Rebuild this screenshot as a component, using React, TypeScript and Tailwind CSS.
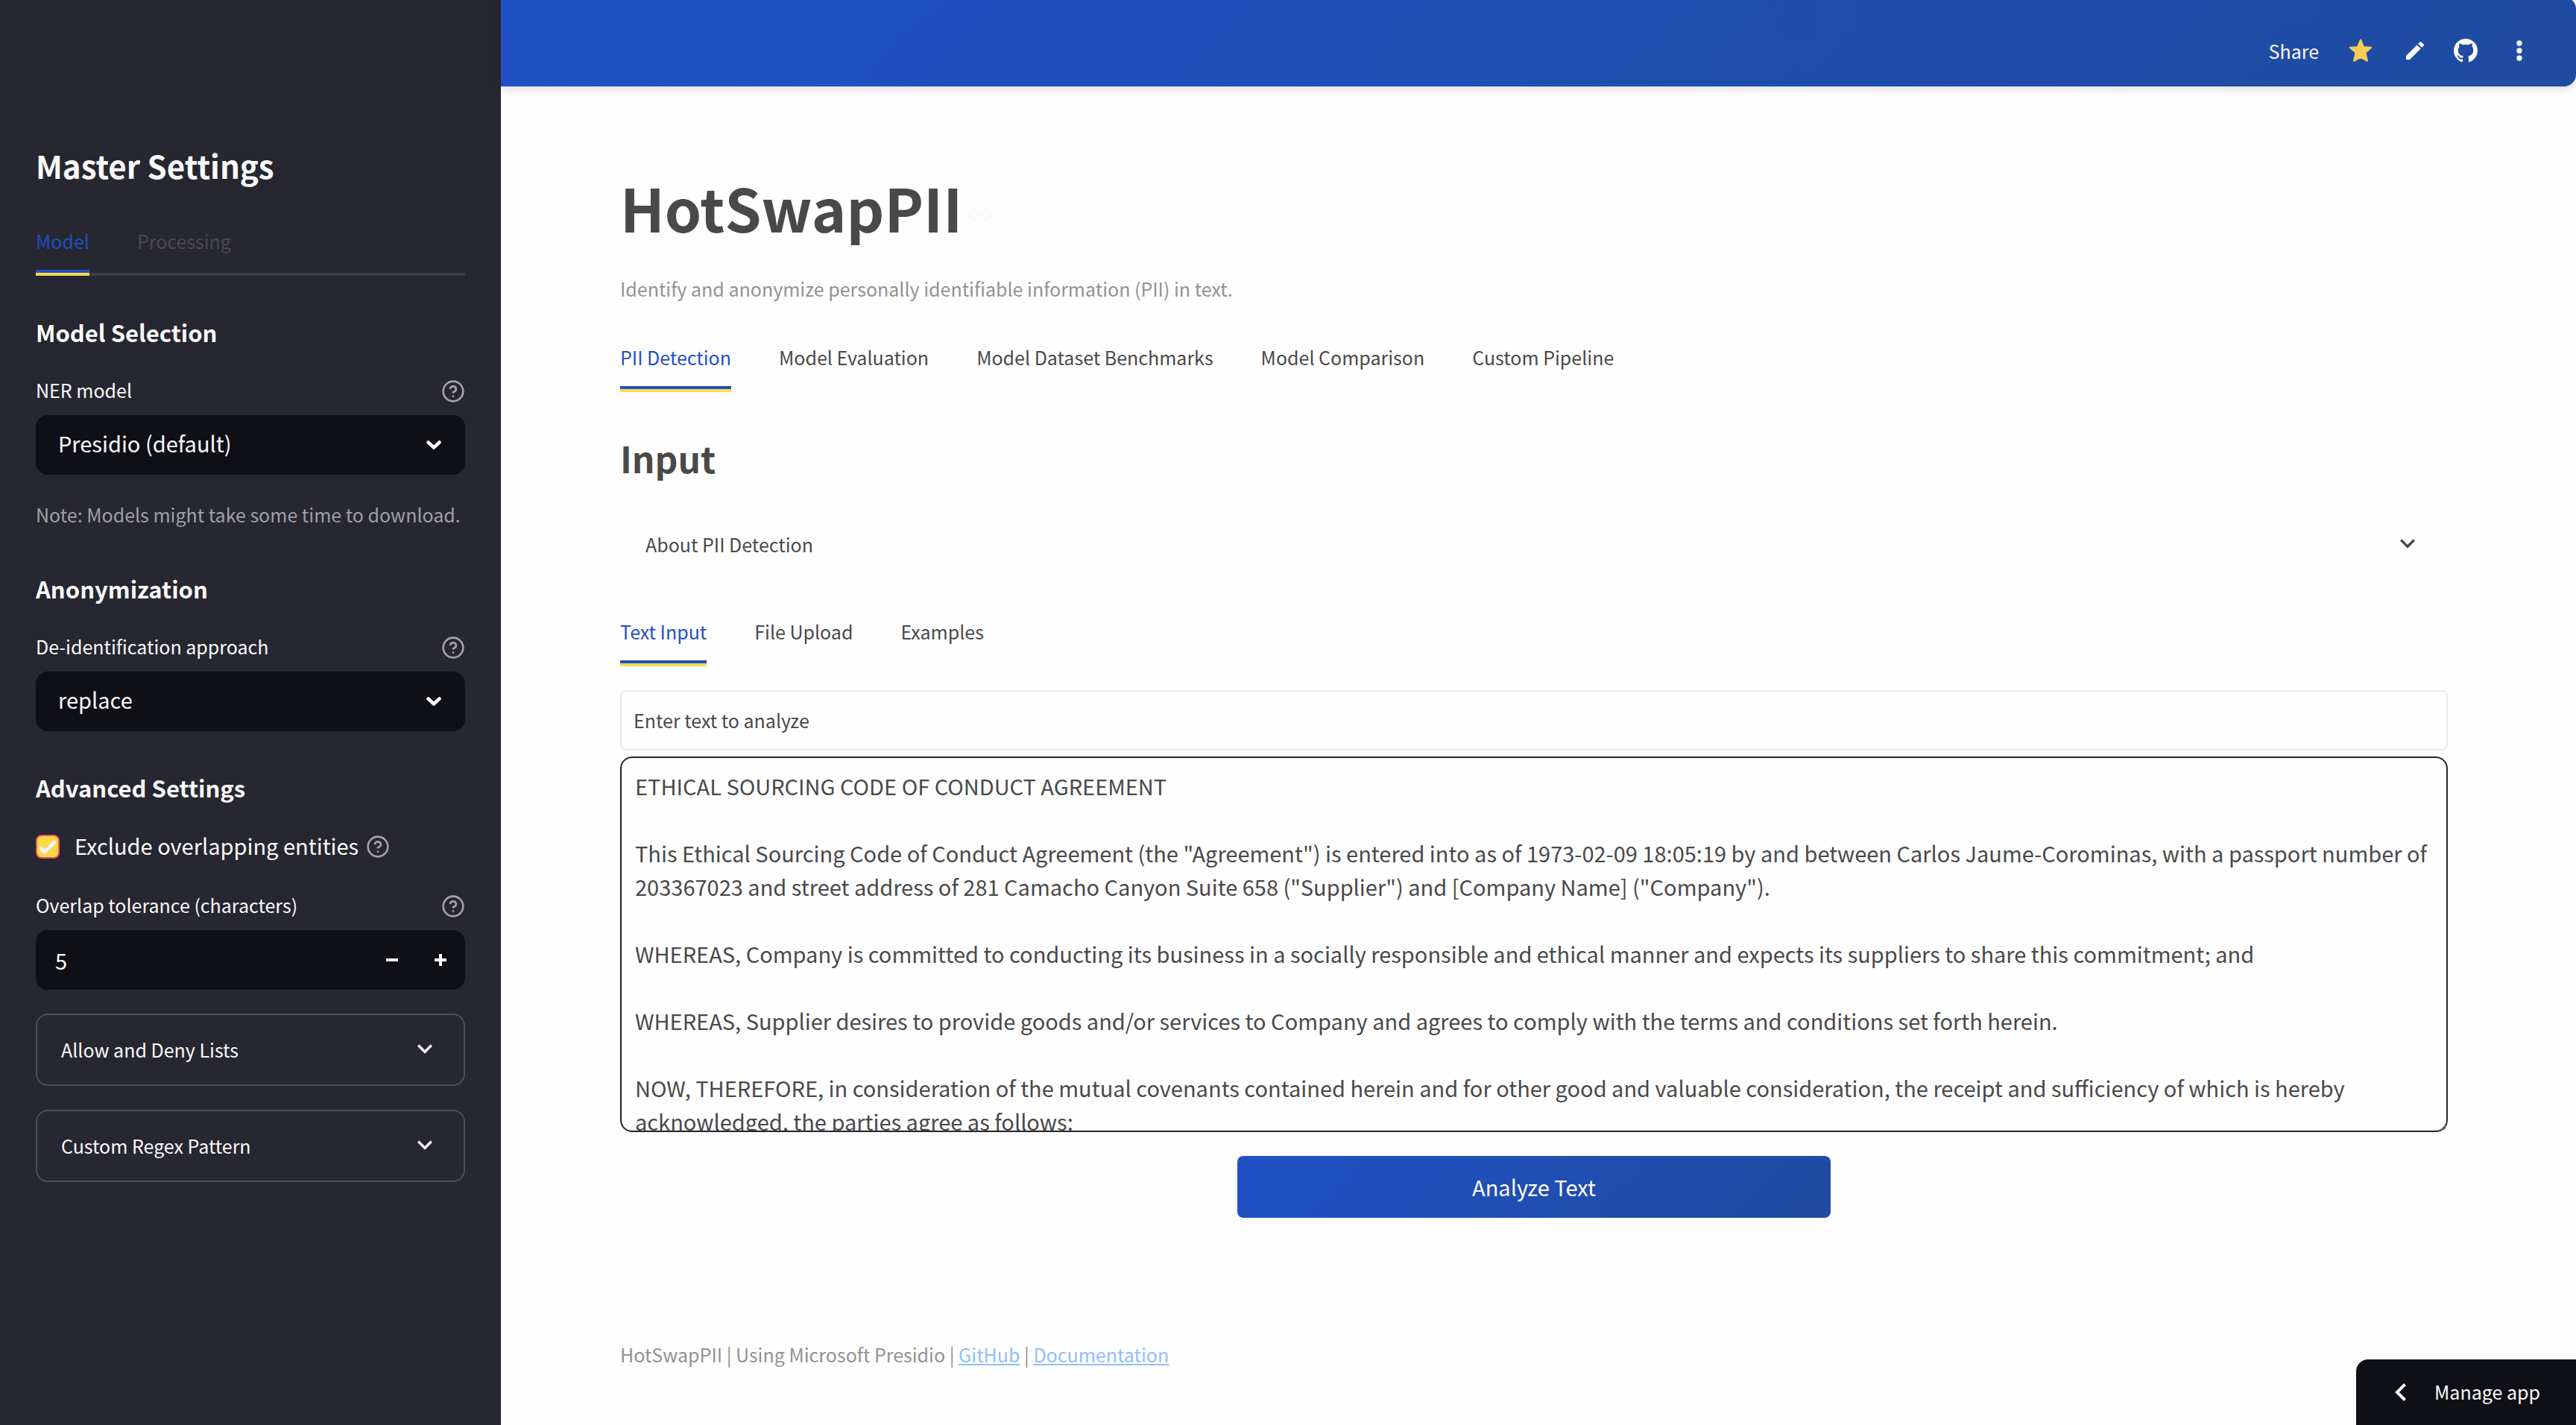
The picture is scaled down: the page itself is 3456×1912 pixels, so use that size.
import React, { useState } from "react";

const AGREEMENT = `ETHICAL SOURCING CODE OF CONDUCT AGREEMENT

This Ethical Sourcing Code of Conduct Agreement (the "Agreement") is entered into as of 1973-02-09 18:05:19 by and between Carlos Jaume-Corominas, with a passport number of 203367023 and street address of 281 Camacho Canyon Suite 658 ("Supplier") and [Company Name] ("Company").

WHEREAS, Company is committed to conducting its business in a socially responsible and ethical manner and expects its suppliers to share this commitment; and

WHEREAS, Supplier desires to provide goods and/or services to Company and agrees to comply with the terms and conditions set forth herein.

NOW, THEREFORE, in consideration of the mutual covenants contained herein and for other good and valuable consideration, the receipt and sufficiency of which is hereby acknowledged, the parties agree as follows:`;

function HelpIcon() {
  return (
    <svg className="mt-1 size-8 shrink-0 text-[#a3a3a7]" viewBox="0 0 24 24" fill="none" stroke="currentColor" strokeWidth="2" strokeLinecap="round" strokeLinejoin="round" role="img" aria-label="Help">
      <circle cx="12" cy="12" r="10" />
      <path d="M9.09 9a3 3 0 0 1 5.83 1c0 2-3 3-3 3" />
      <path d="M12 17h.01" />
    </svg>
  );
}

function ExpandIcon() {
  return (
    <svg className="-mt-1 size-10 shrink-0" viewBox="0 0 24 24" fill="currentColor" aria-hidden="true">
      <path d="M16.59 8.59 12 13.17 7.41 8.59 6 10l6 6 6-6z" />
    </svg>
  );
}

function Tabs({ labels, dark = false }: { labels: string[]; dark?: boolean }) {
  const [active, setActive] = useState(0);
  return (
    <div
      role="tablist"
      className={
        dark
          ? "flex gap-16 text-[#49494b] shadow-[inset_0_-4px_0_#3c3d46]"
          : "flex gap-16 text-[#494949] shadow-[inset_0_-4px_0_#fdfdfd]"
      }
    >
      {labels.map((label, i) => (
        <button
          key={label}
          type="button"
          role="tab"
          aria-selected={i === active}
          onClick={() => setActive(i)}
          className={
            i === active
              ? "border-b-4 border-[#fdda48] text-[#1f4fc6]"
              : "border-b-4 border-transparent"
          }
        >
          <span
            className={
              i === active
                ? "block border-b-4 border-[#1f4fc6] pb-[18px] text-[25px] leading-[42px]"
                : "block border-b-4 border-transparent pb-[18px] text-[25px] leading-[42px]"
            }
          >
            {label}
          </span>
        </button>
      ))}
    </div>
  );
}

function FieldLabel({ htmlFor, children }: { htmlFor: string; children: string }) {
  return (
    <div className="mb-3.5 flex h-10 items-center justify-between">
      <label htmlFor={htmlFor} className="text-[25px] leading-10">
        {children}
      </label>
      <HelpIcon />
    </div>
  );
}

function SelectField({ id, label, options }: { id: string; label: string; options: string[] }) {
  return (
    <div>
      <FieldLabel htmlFor={id}>{label}</FieldLabel>
      <div className="relative">
        <select id={id} className="block h-20 w-full appearance-none rounded-2xl bg-[#0f1016] pr-16 pb-1 pl-[30px] text-[29px]">
          {options.map((o) => (
            <option key={o}>{o}</option>
          ))}
        </select>
        <svg className="pointer-events-none absolute inset-y-0 right-8 my-auto h-3 w-5" viewBox="0 0 20 12" fill="none" stroke="currentColor" strokeWidth="4.5" strokeLinecap="round" aria-hidden="true">
          <path d="M2.5 2.5 10 9.5l7.5-7" />
        </svg>
      </div>
    </div>
  );
}

function SideExpander({ children }: { children: string }) {
  return (
    <button type="button" className="mt-8 flex h-[97px] w-full items-center justify-between rounded-2xl border-2 border-[#4e4f57] px-8 text-[25px]">
      {children}
      <ExpandIcon />
    </button>
  );
}

function SectionHeading({ children }: { children: string }) {
  return <h2 className="text-[31px] leading-[38px] font-bold">{children}</h2>;
}

function Sidebar() {
  const [count, setCount] = useState(5);
  return (
    <aside className="w-[672px] shrink-0 bg-[#262730] px-12 pt-[196px] pb-12 text-[#fafafa]">
      <h1 className="text-[42px] leading-[52px] font-bold">Master Settings</h1>
      <div className="mt-[54px]">
        <Tabs dark labels={["Model", "Processing"]} />
      </div>

      <div className="mt-[57px] mb-[38px]">
        <SectionHeading>Model Selection</SectionHeading>
      </div>
      <SelectField id="ner" label="NER model" options={["Presidio (default)"]} />
      <p className="mt-[33px] text-[25px] leading-10 text-[#a0a0a4]">Note: Models might take some time to download.</p>

      <div className="mt-[61px] mb-[38px]">
        <SectionHeading>Anonymization</SectionHeading>
      </div>
      <SelectField id="approach" label="De-identification approach" options={["replace"]} />

      <div className="mt-[57px] mb-[34px]">
        <SectionHeading>Advanced Settings</SectionHeading>
      </div>
      <div className="mb-9 flex h-12 items-center">
        <span className="relative mt-1 block size-8">
          <input id="exclude" type="checkbox" defaultChecked className="block size-8 appearance-none rounded-lg border-2 border-[#f0584f] bg-[#fbd84a]" />
          <svg className="pointer-events-none absolute inset-0 size-8" viewBox="0 0 32 32" fill="none" stroke="#f2f2f2" strokeWidth="5" aria-hidden="true">
            <path d="M5 16.5 12 23 26.5 8.5" />
          </svg>
        </span>
        <label htmlFor="exclude" className="mr-2.5 ml-5 text-[29px] leading-[48px]">
          Exclude overlapping entities
        </label>
        <HelpIcon />
      </div>

      <FieldLabel htmlFor="tolerance">Overlap tolerance (characters)</FieldLabel>
      <div className="flex h-20 items-center overflow-hidden rounded-2xl bg-[#0f1016]">
        <input
          id="tolerance"
          type="text"
          inputMode="numeric"
          value={count}
          onChange={(e) => setCount(Number(e.target.value) || 0)}
          className="h-full min-w-0 flex-1 bg-transparent pl-[26px] text-[29px] outline-none"
        />
        <button type="button" aria-label="Decrease" onClick={() => setCount(count - 1)} className="flex h-full w-16 items-center justify-center">
          <span className="h-1 w-4 bg-current" />
        </button>
        <button type="button" aria-label="Increase" onClick={() => setCount(count + 1)} className="flex h-full w-[66px] items-center justify-center">
          <svg className="size-4" viewBox="0 0 16 16" fill="currentColor" aria-hidden="true">
            <path d="M6 0h4v6h6v4h-6v6H6v-6H0V6h6z" />
          </svg>
        </button>
      </div>

      <SideExpander>Allow and Deny Lists</SideExpander>
      <SideExpander>Custom Regex Pattern</SideExpander>
    </aside>
  );
}

function TopBar() {
  return (
    <header className="-mt-1 flex h-30 items-center justify-end rounded-r-2xl bg-linear-[135deg,#2151c6,#1f4ba0] pt-6 pr-[60px] text-[#fafafa] shadow-[0_4px_12px_rgba(0,0,0,0.12)]">
      <button type="button" className="mr-[38px] text-[25px] leading-10">Share</button>
      <button type="button" aria-label="Star" className="mr-[39px] text-[#f3cd52]">
        <svg className="size-9" viewBox="0 0 36 36" fill="currentColor" stroke="currentColor" strokeWidth="2" strokeLinejoin="round" aria-hidden="true">
          <path d="M18 3.500 21.900 13 32.300 13.700 24.500 20.600 27 31.800 18 26.900 9 31.800 11.500 20.600 3.700 13.700 14.100 13z" />
        </svg>
      </button>
      <button type="button" aria-label="Edit" className="mr-9">
        <svg className="size-8" viewBox="0 0 24 24" fill="currentColor" aria-hidden="true">
          <path d="M3 17.46v3.04c0 .28.22.5.5.5h3.04c.13 0 .26-.05.35-.15L17.81 9.94l-3.75-3.75L3.15 17.1c-.1.1-.15.22-.15.36zM20.71 7.04a.996.996 0 0 0 0-1.41l-2.34-2.34a.996.996 0 0 0-1.41 0l-1.83 1.83 3.75 3.75 1.83-1.83z" />
        </svg>
      </button>
      <button type="button" aria-label="GitHub" className="mr-10">
        <svg className="size-8" viewBox="0 0 16 16" fill="currentColor" aria-hidden="true">
          <path fillRule="evenodd" d="M8 0C3.58 0 0 3.58 0 8c0 3.54 2.29 6.53 5.47 7.59.4.07.55-.17.55-.38 0-.19-.01-.82-.01-1.49-2.01.37-2.53-.49-2.69-.94-.09-.23-.48-.94-.82-1.13-.28-.15-.68-.52-.01-.53.63-.01 1.08.58 1.23.82.72 1.21 1.87.87 2.33.66.07-.52.28-.87.51-1.07-1.78-.2-3.64-.89-3.64-3.95 0-.87.31-1.59.82-2.15-.08-.2-.36-1.02.08-2.12 0 0 .67-.21 2.2.82.64-.18 1.32-.27 2-.27s1.36.09 2 .27c1.53-1.04 2.2-.82 2.2-.82.44 1.1.16 1.92.08 2.12.51.56.82 1.27.82 2.15 0 3.07-1.87 3.75-3.65 3.95.29.25.54.73.54 1.48 0 1.07-.01 1.93-.01 2.2 0 .21.15.46.55.38A8.01 8.01 0 0 0 16 8c0-4.42-3.58-8-8-8z" />
        </svg>
      </button>
      <button type="button" aria-label="More options">
        <svg className="size-8" viewBox="0 0 32 32" fill="currentColor" aria-hidden="true">
          <circle cx="16" cy="6" r="3.7" />
          <circle cx="16" cy="16" r="3.7" />
          <circle cx="16" cy="26" r="3.7" />
        </svg>
      </button>
    </header>
  );
}

export default function App() {
  return (
    <div className="flex min-h-screen bg-[#fefefe] font-['Noto_Sans_CJK_SC',sans-serif] text-[#494949]">
      <Sidebar />
      <div className="min-w-0 flex-1">
        <TopBar />
        <main className="pt-[109px] pr-[172px] pb-12 pl-40">
          <div className="flex items-center gap-2">
            <h1 className="text-[79px] leading-[106px] font-bold">HotSwapPII</h1>
            <svg className="mt-5 h-4 w-8 text-[#fafafb]" viewBox="0 0 32 16" fill="none" stroke="currentColor" strokeWidth="3" aria-hidden="true">
              <path d="M13 1.5H8a6.5 6.5 0 0 0 0 13h5M19 1.5h5a6.5 6.5 0 0 1 0 13h-5M10 8h12" />
            </svg>
          </div>
          <p className="mt-9 mb-[51px] text-[25px] leading-10 text-[#929292]">
            Identify and anonymize personally identifiable information (PII) in text.
          </p>
          <Tabs labels={["PII Detection", "Model Evaluation", "Model Dataset Benchmarks", "Model Comparison", "Custom Pipeline"]} />

          <h2 className="mt-[58px] mb-10 text-[48px] leading-[60px] font-bold">Input</h2>
          <button type="button" className="mb-12 flex h-[94px] w-full items-center justify-between rounded-2xl border-2 border-[#fcfcfc] px-8 text-[25px]">
            About PII Detection
            <ExpandIcon />
          </button>
          <Tabs labels={["Text Input", "File Upload", "Examples"]} />

          <label htmlFor="source" className="mt-8 mb-2 flex h-[81px] items-center rounded-lg border-2 border-[#e9e9ee] px-4 text-[25px]">
            Enter text to analyze
          </label>
          <textarea
            id="source"
            defaultValue={AGREEMENT}
            spellCheck={false}
            className="block h-[504px] w-full resize-y overflow-hidden rounded-2xl border-2 border-[#262730] px-[18px] pt-[15px] text-[29px] leading-[45px] shadow-[inset_0_0_0_1px_#ebebef] outline-none"
          />
          <div className="mt-8 grid grid-cols-3 gap-8">
            <button type="button" className="col-start-2 h-[83px] rounded-lg bg-linear-[135deg,#2151c6,#1f4ba0] text-[29px] text-white">
              Analyze Text
            </button>
          </div>
          <hr className="mt-24 mb-[65px] border-t-2 border-[#fbfbfc]" />
          <footer className="text-[25px] leading-10 text-[#929292]">
            HotSwapPII | Using Microsoft Presidio |{" "}
            <a href="#github" className="text-[#90bffb] underline">GitHub</a> |{" "}
            <a href="#documentation" className="text-[#90bffb] underline">Documentation</a>
          </footer>
        </main>
      </div>
      <button type="button" className="fixed right-0 bottom-0 flex h-[88px] items-center gap-[37px] rounded-tl-2xl bg-[#0f1016] pr-12 pl-[52px] text-[25px] text-[#fafafa]">
        <svg className="h-6 w-4" viewBox="0 0 16 24" fill="none" stroke="currentColor" strokeWidth="4" aria-hidden="true">
          <path d="M13.5 1.5 3 12l10.500 10.500" />
        </svg>
        Manage app
      </button>
    </div>
  );
}
